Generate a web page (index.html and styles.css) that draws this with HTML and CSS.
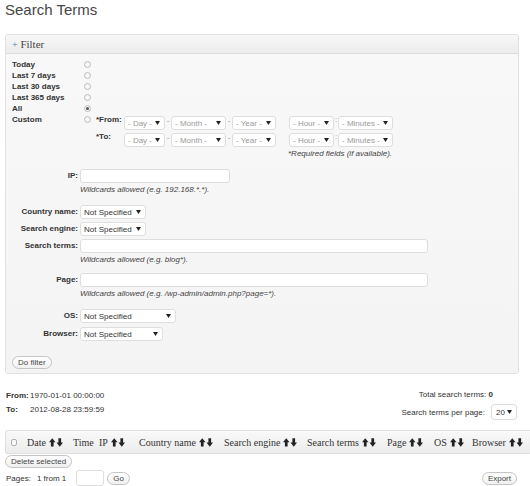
FILE: index.html
```html
<!DOCTYPE html>
<html>
<head>
<meta charset="utf-8">
<title>Search Terms</title>
<link rel="stylesheet" href="styles.css">
</head>
<body>
<div class="wrap">
  <h2 class="page-title">Search Terms</h2>

  <div class="filter-box">
    <div class="filter-head"><span class="plus">+</span> Filter</div>
    <div class="filter-body">
      <div class="period"><span class="period-label">Today</span><span class="radio"></span></div>
      <div class="period"><span class="period-label">Last 7 days</span><span class="radio"></span></div>
      <div class="period"><span class="period-label">Last 30 days</span><span class="radio"></span></div>
      <div class="period"><span class="period-label">Last 365 days</span><span class="radio"></span></div>
      <div class="period"><span class="period-label">All</span><span class="radio checked"></span></div>
      <div class="period">
        <span class="period-label">Custom</span><span class="radio"></span>
        <div class="range">
          <span class="range-label">*From:</span>
          <div class="range-selects">
            <span class="sel sel-day placeholder">- Day -<svg class="caret" width="5" height="4" viewBox="0 0 5 4"><path d="M0 0H5L2.5 4Z"/></svg></span>
            <span class="sep">-</span>
            <span class="sel sel-month placeholder">- Month -<svg class="caret" width="5" height="4" viewBox="0 0 5 4"><path d="M0 0H5L2.5 4Z"/></svg></span>
            <span class="sep">-</span>
            <span class="sel sel-year placeholder">- Year -<svg class="caret" width="5" height="4" viewBox="0 0 5 4"><path d="M0 0H5L2.5 4Z"/></svg></span>
            <span class="sel sel-hour placeholder">- Hour -<svg class="caret" width="5" height="4" viewBox="0 0 5 4"><path d="M0 0H5L2.5 4Z"/></svg></span>
            <span class="colon">:</span>
            <span class="sel sel-min placeholder">- Minutes -<svg class="caret" width="5" height="4" viewBox="0 0 5 4"><path d="M0 0H5L2.5 4Z"/></svg></span>
          </div>
          <span class="range-label">*To:</span>
          <div class="range-selects">
            <span class="sel sel-day placeholder">- Day -<svg class="caret" width="5" height="4" viewBox="0 0 5 4"><path d="M0 0H5L2.5 4Z"/></svg></span>
            <span class="sep">-</span>
            <span class="sel sel-month placeholder">- Month -<svg class="caret" width="5" height="4" viewBox="0 0 5 4"><path d="M0 0H5L2.5 4Z"/></svg></span>
            <span class="sep">-</span>
            <span class="sel sel-year placeholder">- Year -<svg class="caret" width="5" height="4" viewBox="0 0 5 4"><path d="M0 0H5L2.5 4Z"/></svg></span>
            <span class="sel sel-hour placeholder">- Hour -<svg class="caret" width="5" height="4" viewBox="0 0 5 4"><path d="M0 0H5L2.5 4Z"/></svg></span>
            <span class="colon">:</span>
            <span class="sel sel-min placeholder">- Minutes -<svg class="caret" width="5" height="4" viewBox="0 0 5 4"><path d="M0 0H5L2.5 4Z"/></svg></span>
          </div>
          <span></span>
          <div class="required">*Required fields (if available).</div>
        </div>
      </div>

      <div class="field-row row-ip">
        <span class="field-label">IP:</span>
        <span class="input input-ip"></span>
      </div>
      <div class="hint">Wildcards allowed (e.g. 192.168.*.*).</div>

      <div class="field-row row-country">
        <span class="field-label">Country name:</span>
        <span class="sel sel-ns">Not Specified<svg class="caret" width="5" height="4" viewBox="0 0 5 4"><path d="M0 0H5L2.5 4Z"/></svg></span>
      </div>
      <div class="field-row row-tight">
        <span class="field-label">Search engine:</span>
        <span class="sel sel-ns">Not Specified<svg class="caret" width="5" height="4" viewBox="0 0 5 4"><path d="M0 0H5L2.5 4Z"/></svg></span>
      </div>
      <div class="field-row row-tight">
        <span class="field-label">Search terms:</span>
        <span class="input input-wide"></span>
      </div>
      <div class="hint">Wildcards allowed (e.g. blog*).</div>

      <div class="field-row row-page">
        <span class="field-label">Page:</span>
        <span class="input input-wide"></span>
      </div>
      <div class="hint">Wildcards allowed (e.g. /wp-admin/admin.php?page=*).</div>

      <div class="field-row row-os">
        <span class="field-label">OS:</span>
        <span class="sel sel-os">Not Specified<svg class="caret" width="5" height="4" viewBox="0 0 5 4"><path d="M0 0H5L2.5 4Z"/></svg></span>
      </div>
      <div class="field-row row-browser">
        <span class="field-label">Browser:</span>
        <span class="sel sel-browser">Not Specified<svg class="caret" width="5" height="4" viewBox="0 0 5 4"><path d="M0 0H5L2.5 4Z"/></svg></span>
      </div>

      <div class="filter-actions"><span class="button">Do filter</span></div>
    </div>
  </div>

  <div class="summary">
    <div class="range-info">
      <span class="strong">From:</span><span>1970-01-01 00:00:00</span>
      <span class="strong">To:</span><span>2012-08-28 23:59:59</span>
    </div>
    <div class="totals">
      <div class="total-line">Total search terms: <b>0</b></div>
      <div class="per-page">Search terms per page:
        <span class="sel sel-per">20<svg class="caret" width="5" height="4" viewBox="0 0 5 4"><path d="M0 0H5L2.5 4Z"/></svg></span>
      </div>
    </div>
  </div>

  <div class="list-head">
    <span class="cell cell-cb"><span class="checkbox"></span></span>
    <span class="cell">Date<svg class="sort" width="14" height="9" viewBox="0 0 14 9"><path d="M0 4.2L3.25 0.2L6.5 4.2H4.6V8.6H1.9V4.2Z M7.5 4.6H9.4V0.3H12.1V4.6H14L10.75 8.7Z"/></svg></span>
    <span class="cell">Time</span>
    <span class="cell">IP<svg class="sort" width="14" height="9" viewBox="0 0 14 9"><path d="M0 4.2L3.25 0.2L6.5 4.2H4.6V8.6H1.9V4.2Z M7.5 4.6H9.4V0.3H12.1V4.6H14L10.75 8.7Z"/></svg></span>
    <span class="cell">Country name<svg class="sort" width="14" height="9" viewBox="0 0 14 9"><path d="M0 4.2L3.25 0.2L6.5 4.2H4.6V8.6H1.9V4.2Z M7.5 4.6H9.4V0.3H12.1V4.6H14L10.75 8.7Z"/></svg></span>
    <span class="cell">Search engine<svg class="sort" width="14" height="9" viewBox="0 0 14 9"><path d="M0 4.2L3.25 0.2L6.5 4.2H4.6V8.6H1.9V4.2Z M7.5 4.6H9.4V0.3H12.1V4.6H14L10.75 8.7Z"/></svg></span>
    <span class="cell">Search terms<svg class="sort" width="14" height="9" viewBox="0 0 14 9"><path d="M0 4.2L3.25 0.2L6.5 4.2H4.6V8.6H1.9V4.2Z M7.5 4.6H9.4V0.3H12.1V4.6H14L10.75 8.7Z"/></svg></span>
    <span class="cell">Page<svg class="sort" width="14" height="9" viewBox="0 0 14 9"><path d="M0 4.2L3.25 0.2L6.5 4.2H4.6V8.6H1.9V4.2Z M7.5 4.6H9.4V0.3H12.1V4.6H14L10.75 8.7Z"/></svg></span>
    <span class="cell">OS<svg class="sort" width="14" height="9" viewBox="0 0 14 9"><path d="M0 4.2L3.25 0.2L6.5 4.2H4.6V8.6H1.9V4.2Z M7.5 4.6H9.4V0.3H12.1V4.6H14L10.75 8.7Z"/></svg></span>
    <span class="cell">Browser<svg class="sort" width="14" height="9" viewBox="0 0 14 9"><path d="M0 4.2L3.25 0.2L6.5 4.2H4.6V8.6H1.9V4.2Z M7.5 4.6H9.4V0.3H12.1V4.6H14L10.75 8.7Z"/></svg></span>
  </div>

  <div class="bulk"><span class="button">Delete selected</span></div>

  <div class="pager">
    <div class="pager-left">
      <span class="pages-label">Pages:</span>
      <span class="pages-count">1 from 1</span>
      <span class="input input-page"></span>
      <span class="button">Go</span>
    </div>
    <span class="button">Export</span>
  </div>
</div>
</body>
</html>
```

FILE: styles.css
```css
* { box-sizing: border-box; }

html, body {
  margin: 0;
  padding: 0;
  background: #ffffff;
}

body {
  font-family: "Liberation Sans", Arial, sans-serif;
  font-size: 8px;
  color: #333333;
  width: 530px;
  overflow: hidden;
}

.wrap {
  padding-left: 5px;
}

.page-title {
  margin: 0;
  padding-top: 1px;
  font-size: 15px;
  line-height: 18px;
  font-weight: normal;
  color: #464646;
}

/* ---------- filter box ---------- */
.filter-box {
  margin-top: 15px;
  width: 514px;
  border: 1px solid #e2e2e2;
  border-radius: 3px;
  background: #f7f7f7;
  overflow: hidden;
}

.filter-head {
  height: 19px;
  line-height: 19px;
  padding-left: 6px;
  font-family: "Liberation Serif", "Times New Roman", serif;
  font-size: 11px;
  color: #464646;
  background: linear-gradient(#f7f7f7, #ececec);
  border-bottom: 1px solid #dcdcdc;
}

.plus {
  color: #3a87ad;
  font-size: 10px;
}

.filter-body {
  padding: 5px 0 4px 6px;
  background: linear-gradient(#f8f8f8, #f4f4f4);
}

.period {
  display: flex;
  align-items: flex-start;
  line-height: 11px;
}

.period-label {
  width: 72px;
  font-weight: bold;
  color: #333;
}

.radio {
  width: 7px;
  height: 7px;
  margin-top: 2px;
  border: 1px solid #bdbdbd;
  border-radius: 50%;
  background: radial-gradient(#ffffff, #ececec);
  position: relative;
  flex: none;
}

.radio.checked::after {
  content: "";
  position: absolute;
  left: 1px;
  top: 1px;
  width: 3px;
  height: 3px;
  border-radius: 50%;
  background: #555;
}

.range {
  margin-left: 5px;
  display: grid;
  grid-template-columns: 28px auto;
}

.range-label {
  font-weight: bold;
  line-height: 11px;
}

.range-selects {
  display: flex;
  align-items: center;
  margin-top: 2px;
  margin-bottom: 1px;
}

.sel {
  display: inline-flex;
  align-items: center;
  justify-content: space-between;
  height: 14px;
  padding: 0 4px 0 3px;
  background: #ffffff;
  border: 1px solid #dedede;
  border-radius: 3px;
  font-size: 8px;
  color: #333;
  white-space: nowrap;
  flex: none;
}

.sel.placeholder {
  color: #9a9a9a;
}

.caret {
  fill: #222;
  flex: none;
}

.sel-day { width: 41px; }
.sel-month { width: 55px; }
.sel-year { width: 44px; }
.sel-hour { width: 45px; margin-left: 13px; }
.sel-min { width: 55px; }

.sep {
  width: 6px;
  text-align: center;
  color: #999;
  line-height: 8px;
  align-self: flex-start;
  margin-top: 1px;
}

.colon {
  width: 4px;
  text-align: center;
  color: #999;
  align-self: flex-start;
  line-height: 7px;
}

.required {
  padding-left: 164px;
  line-height: 11px;
  font-style: italic;
  color: #444;
  white-space: nowrap;
}

/* ---------- field rows ---------- */
.field-row {
  display: grid;
  grid-template-columns: 66px auto;
  column-gap: 2px;
  align-items: start;
  justify-items: start;
}

.field-label {
  justify-self: end;
  font-weight: bold;
  line-height: 11px;
  margin-top: 1px;
  white-space: nowrap;
}

.row-ip { margin-top: 10px; }
.row-country { margin-top: 10px; }
.row-tight { margin-top: 3px; }
.row-page { margin-top: 8px; }
.row-os { margin-top: 10px; }
.row-browser { margin-top: 4px; }

.input {
  display: block;
  height: 14px;
  background: #ffffff;
  border: 1px solid #dedede;
  border-radius: 3px;
}

.input-ip { width: 150px; }
.input-wide { width: 348px; }

.hint {
  margin-left: 68px;
  margin-top: 1px;
  line-height: 11px;
  font-style: italic;
  color: #444;
}

.sel-ns { width: 66px; }
.sel-os { width: 96px; }
.sel-browser { width: 83px; }

.filter-actions {
  margin-top: 15px;
}

.button {
  display: inline-block;
  height: 13px;
  line-height: 11px;
  padding: 0 5px;
  border: 1px solid #c4c4c4;
  border-radius: 7px;
  background: linear-gradient(#ffffff, #f0f0f0);
  color: #464646;
  font-size: 8px;
  white-space: nowrap;
}

/* ---------- summary ---------- */
.summary {
  margin-top: 14px;
  display: flex;
  justify-content: space-between;
  align-items: flex-start;
  padding-left: 1px;
  padding-right: 13px;
}

.range-info {
  display: grid;
  grid-template-columns: 24px auto;
  line-height: 14px;
  padding-top: 1px;
}

.strong {
  font-weight: bold;
}

.totals {
  display: flex;
  flex-direction: column;
  align-items: flex-end;
}

.total-line {
  line-height: 14px;
  margin-right: 24px;
}

.per-page {
  display: flex;
  align-items: center;
  gap: 6px;
  margin-top: 2px;
}

.sel-per {
  width: 26px;
  height: 16px;
  padding: 0 4px 0 4px;
}

/* ---------- list header ---------- */
.list-head {
  margin-top: 10px;
  height: 24px;
  display: grid;
  grid-template-columns: 16px 46px 26px 40px 85px 83px 80px 47px 38px 1fr;
  align-items: center;
  border: 1px solid #dfdfdf;
  border-radius: 3px 0 0 3px;
  border-right: none;
  background: linear-gradient(#f9f9f9, #ececec);
  font-family: "Liberation Serif", "Times New Roman", serif;
  font-size: 10px;
  color: #333;
}

.cell {
  display: flex;
  align-items: center;
  padding-left: 5px;
  white-space: nowrap;
}

.cell-cb {
  padding-left: 5px;
}

.checkbox {
  display: block;
  width: 6px;
  height: 7px;
  border: 1px solid #b0b0b0;
  border-radius: 2px;
  background: #fafafa;
}

.sort {
  margin-left: 3px;
  fill: #222;
  flex: none;
}

.bulk {
  margin-top: 1px;
}

.pager {
  margin-top: 2px;
  display: flex;
  justify-content: space-between;
  align-items: center;
  padding-left: 1px;
  padding-right: 13px;
}

.pager-left {
  display: flex;
  align-items: center;
}

.pages-count {
  margin-left: 6px;
}

.input-page {
  width: 28px;
  height: 16px;
  margin-left: 10px;
}

.pager-left .button {
  margin-left: 3px;
}
```
